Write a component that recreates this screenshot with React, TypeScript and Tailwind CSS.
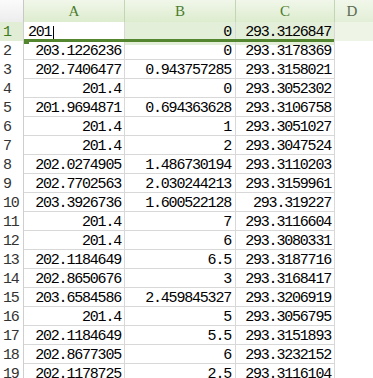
const ROWS: [string, string, string][] = [
  ['201', '0', '293.3126847'],
  ['203.1226236', '0', '293.3178369'],
  ['202.7406477', '0.943757285', '293.3158021'],
  ['201.4', '0', '293.3052302'],
  ['201.9694871', '0.694363628', '293.3106758'],
  ['201.4', '1', '293.3051027'],
  ['201.4', '2', '293.3047524'],
  ['202.0274905', '1.486730194', '293.3110203'],
  ['202.7702563', '2.030244213', '293.3159961'],
  ['203.3926736', '1.600522128', '293.319227'],
  ['201.4', '7', '293.3116604'],
  ['201.4', '6', '293.3080331'],
  ['202.1184649', '6.5', '293.3187716'],
  ['202.8650676', '3', '293.3168417'],
  ['203.6584586', '2.459845327', '293.3206919'],
  ['201.4', '5', '293.3056795'],
  ['202.1184649', '5.5', '293.3151893'],
  ['202.8677305', '6', '293.3232152'],
  ['202.1178725', '2.5', '293.3116104'],
]

const cols = 'grid grid-cols-[24px_101px_111px_99px_1fr]'
const num = 'font-[Liberation_Mono,monospace] text-[15px] tracking-[-1.2px] text-black'
const head = 'font-[Liberation_Serif,serif] text-[15px]'

const Header = () => (
  <div className={`${cols} h-[22px] border-b border-[#b9cfa8]`}>
    <div className="border-r border-[#c8c8c8] bg-gradient-to-b from-[#fbfbfb] to-[#ececec]" />
    {['A', 'B', 'C'].map((l) => (
      <div
        key={l}
        className={`flex items-center justify-center border-r border-[#c3d6b4] bg-gradient-to-b from-[#f1f7ea] to-[#dcebcd] ${head} text-[#4b7d2e]`}
      >
        {l}
      </div>
    ))}
    <div
      className={`flex items-center justify-center bg-gradient-to-b from-[#f1f7ea] to-[#e2eed6] pr-[4px] ${head} text-[#5a6a52]`}
    >
      D
    </div>
  </div>
)

const Row = ({ i, r }: { i: number; r: [string, string, string] }) => {
  const first = i === 0
  return (
    <div className={`${cols} h-[19px] border-b border-[#d8d8d8]`}>
      <div
        className={`flex items-center border-r border-[#cfcfcf] pl-[3px] ${num} ${
          first ? 'bg-[#e1edd4] !text-[#3e7b20]' : 'bg-white !text-[#333]'
        }`}
      >
        {i + 1}
      </div>
      {first ? (
        <div className={`flex items-center border-r border-[#d8d8d8] bg-white pl-[4px] ${num}`}>
          {r[0]}
          <span className="ml-[2px] h-[14px] w-px bg-black" />
        </div>
      ) : (
        <div className={`flex items-center justify-end border-r border-[#d8d8d8] pr-[3px] ${num}`}>{r[0]}</div>
      )}
      <div
        className={`flex items-center justify-end border-r border-[#d8d8d8] pr-[4px] ${num} ${
          first ? 'bg-[#e4efd9]' : ''
        }`}
      >
        {r[1]}
      </div>
      <div
        className={`flex items-center justify-end border-r border-[#d8d8d8] pr-[3px] ${num} ${
          first ? 'bg-[#e4efd9]' : ''
        }`}
      >
        {r[2]}
      </div>
      <div className={first ? 'bg-[#eef5e7]' : 'bg-white'} />
    </div>
  )
}

export default function App() {
  return (
    <div className="relative h-[378px] w-[373px] overflow-hidden bg-white">
      <Header />
      {ROWS.map((r, i) => (
        <Row key={i} i={i} r={r} />
      ))}
      {/* selection outline under row 1 */}
      <div className="absolute left-[24px] top-[39px] h-[3px] w-[310px] bg-[#54862f]" />
      <div className="absolute left-[24px] top-[39px] h-[5px] w-[5px] bg-[#54862f]" />
    </div>
  )
}
